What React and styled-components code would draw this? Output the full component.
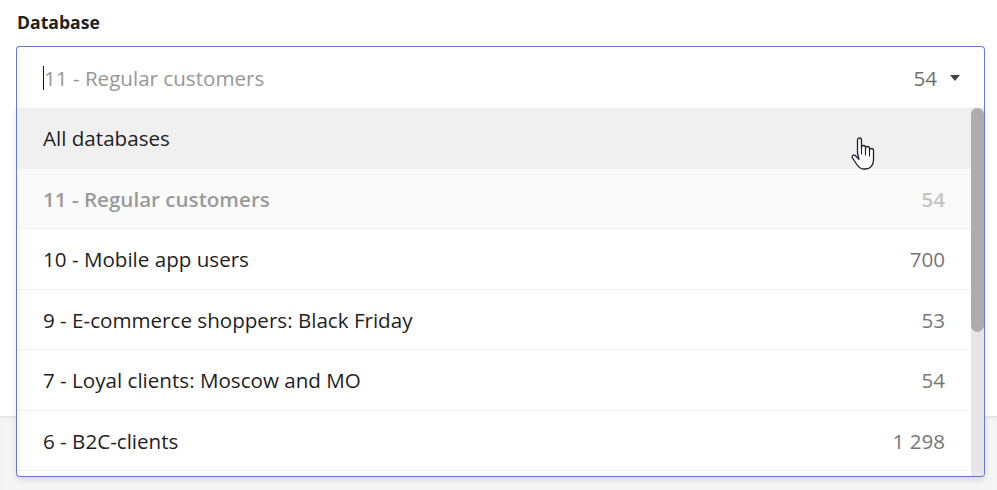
import React from "react";
import styled, { createGlobalStyle } from "styled-components";

const GlobalStyle = createGlobalStyle`
  body {
    margin: 0;
    font-family: "Open Sans", Lato, sans-serif;
    background: #fff;
  }
`;

const databases = [
  { name: "11 - Regular customers", count: "54", disabled: true },
  { name: "10 - Mobile app users", count: "700" },
  { name: "9 - E-commerce shoppers: Black Friday", count: "53" },
  { name: "7 - Loyal clients: Moscow and MO", count: "54" },
  { name: "6 - B2C-clients", count: "1 298" },
];

const App = () => {
  return (
    <Page>
      <GlobalStyle />
      <Form>
        <Label>Database</Label>
        <Select>
          <Control>
            <Caret />
            <Value>11 - Regular customers</Value>
            <Count>54</Count>
            <Arrow />
          </Control>
          <Menu>
            <List>
              <Option hovered>
                <OptionName>All databases</OptionName>
              </Option>
              {databases.map((item) => (
                <Option key={item.name} disabled={item.disabled}>
                  <OptionName disabled={item.disabled}>{item.name}</OptionName>
                  <OptionCount disabled={item.disabled}>{item.count}</OptionCount>
                </Option>
              ))}
            </List>
            <ScrollTrack>
              <ScrollThumb />
            </ScrollTrack>
          </Menu>
        </Select>
      </Form>
      <Footer />
      <Cursor width="26" height="35" viewBox="0 0 26 35">
        <path
          d="M7.5 17 V4 a2 2 0 0 1 4 0 V13 V11.5 a2 2 0 0 1 4 0 V14 V12.5 a2 2 0 0 1 4 0 V15 V14.5 a2 2 0 0 1 4 0 V24 c0 5 -3 9 -8 9 h-2 c-3 0 -5 -2 -7 -5 l-4 -6 a1.8 1.8 0 0 1 3 -2.2 l3.5 3.5 Z"
          fill="#fff"
          stroke="#1f1f2b"
          strokeWidth="1.3"
          strokeLinejoin="round"
        />
        <path d="M11.5 13 v5 M15.5 14 v5 M19.5 15 v5" stroke="#1f1f2b" strokeWidth="1.1" strokeLinecap="round" />
      </Cursor>
    </Page>
  );
};

const Page = styled.div`
  position: relative;
  height: 490px;
  display: flex;
  flex-direction: column;
  overflow: hidden;
`;

const Form = styled.div`
  position: relative;
  z-index: 2;
  padding: 11px 12px 0 16px;
`;

const Label = styled.div`
  font-size: 17.6px;
  line-height: 22px;
  font-weight: 700;
  color: #222;
  margin-left: 1px;
  margin-bottom: 13px;
`;

const Select = styled.div`
  position: relative;
`;

const Control = styled.div`
  position: relative;
  height: 62px;
  box-sizing: border-box;
  display: flex;
  align-items: center;
  padding: 0 24px 0 27px;
  border: 1px solid #6878d2;
  border-bottom: none;
  border-radius: 4px 4px 0 0;
  background: #fff;
`;

const Caret = styled.span`
  position: absolute;
  left: 26px;
  top: 19px;
  width: 1px;
  height: 24px;
  background: #111;
`;

const Value = styled.span`
  flex: 1;
  font-size: 20.6px;
  color: #979797;
`;

const Count = styled.span`
  font-size: 20.6px;
  color: #6f6f6f;
  margin-right: 13px;
`;

const Arrow = styled.span`
  width: 0;
  height: 0;
  border-left: 5px solid transparent;
  border-right: 5px solid transparent;
  border-top: 6px solid #444;
`;

const Menu = styled.div`
  position: absolute;
  top: 100%;
  left: 0;
  right: 0;
  height: 369px;
  box-sizing: border-box;
  display: flex;
  overflow: hidden;
  background: #fff;
  border: 1px solid #6878d2;
  border-top: none;
  border-radius: 0 0 4px 4px;
  box-shadow: 0 3px 6px rgba(0, 0, 0, 0.12);
`;

const List = styled.div`
  flex: 1;
  min-width: 0;
  overflow: hidden;
`;

const ScrollTrack = styled.div`
  width: 13px;
  flex-shrink: 0;
  background: #e6e6e6;
`;

const ScrollThumb = styled.div`
  height: 224px;
  border-radius: 7px;
  background: #adadad;
`;

const Option = styled.div`
  height: 60.5px;
  box-sizing: border-box;
  display: flex;
  align-items: center;
  justify-content: space-between;
  padding: 1px 26px 0 26px;
  border-bottom: 1px solid #f2f2f2;
  background: ${(p) => (p.hovered ? "#f0f0f0" : p.disabled ? "#fafafa" : "#fff")};
`;

const OptionName = styled.span`
  font-size: 20.6px;
  white-space: nowrap;
  color: ${(p) => (p.disabled ? "#9a9a9a" : "#1e1e1e")};
  font-weight: ${(p) => (p.disabled ? 600 : 400)};
`;

const OptionCount = styled.span`
  font-size: 20.6px;
  color: ${(p) => (p.disabled ? "#c4c4c4" : "#777")};
  font-weight: ${(p) => (p.disabled ? 600 : 400)};
`;

const Footer = styled.div`
  margin-top: auto;
  height: 73px;
  background: #f5f5f5;
  border-top: 1px solid #e2e2e2;
  box-shadow: inset 0 2px 3px rgba(0, 0, 0, 0.04);
`;

const Cursor = styled.svg`
  position: absolute;
  left: 850px;
  top: 136px;
  z-index: 5;
  pointer-events: none;
`;

export default App;
